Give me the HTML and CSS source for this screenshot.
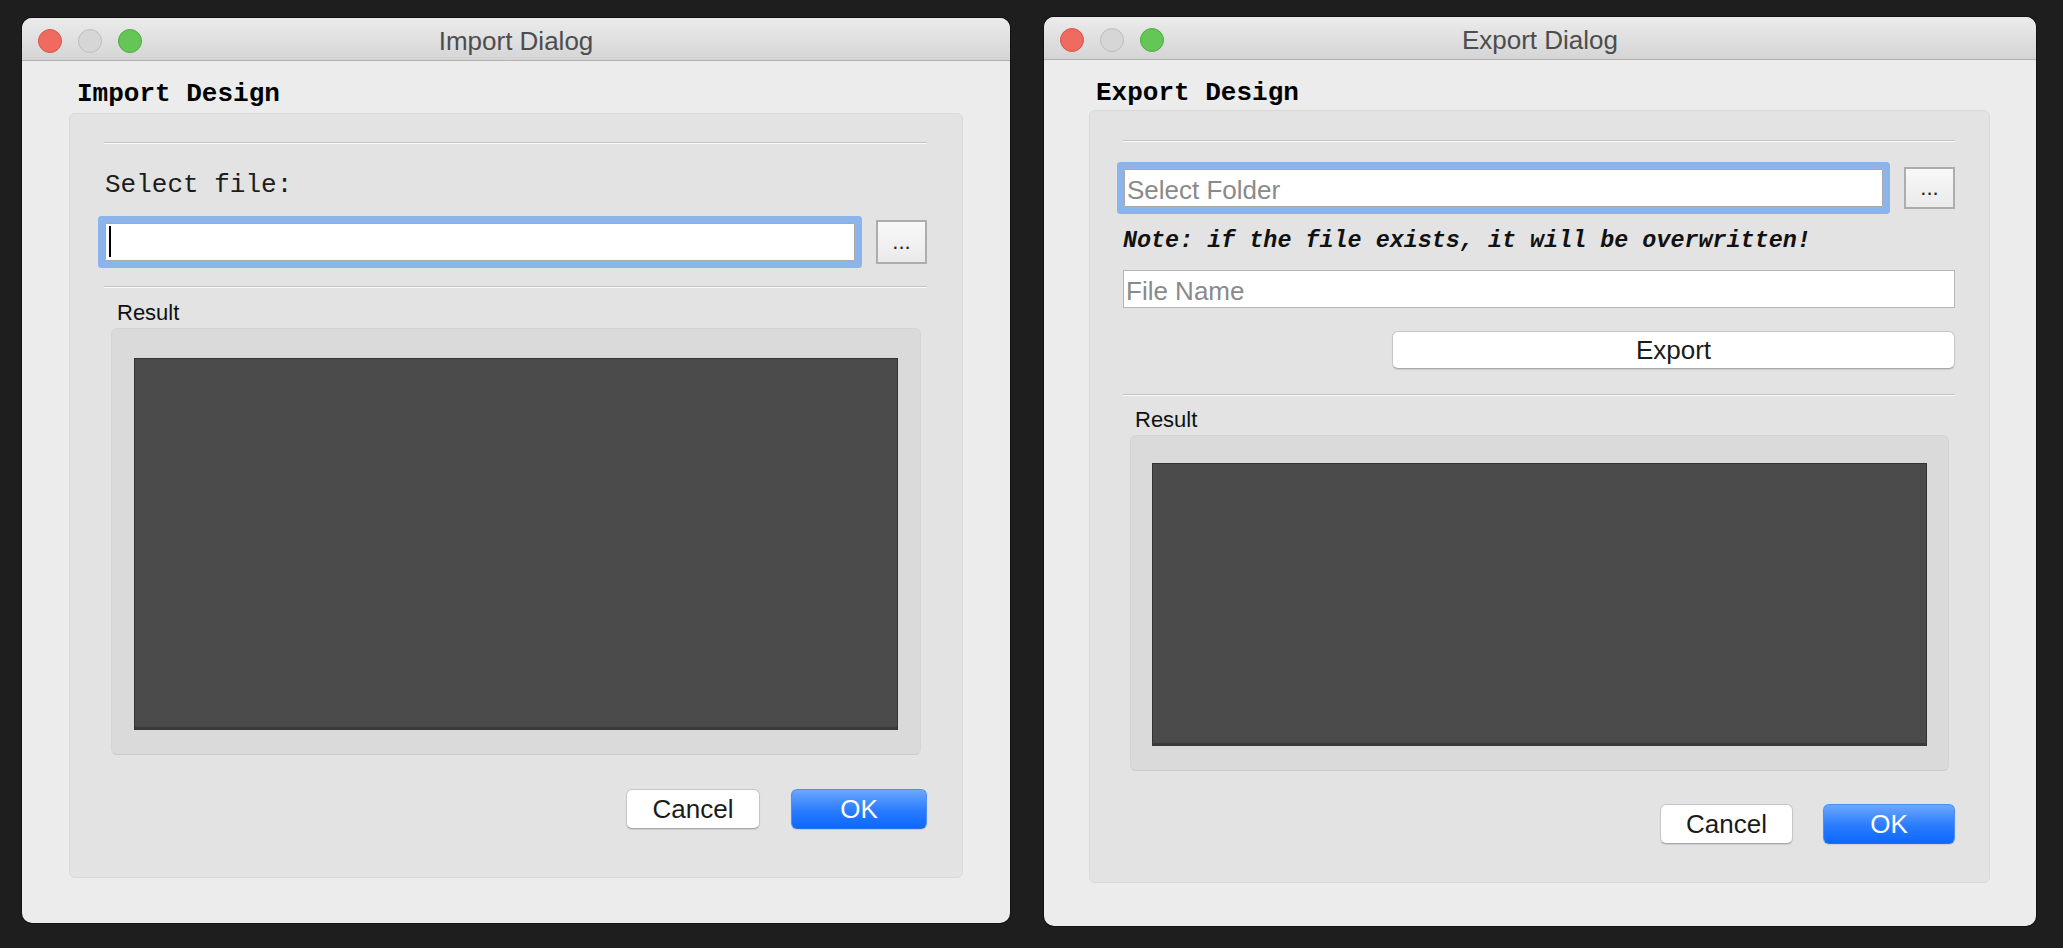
FILE: index.html
```html
<!DOCTYPE html>
<html lang="en">
<head>
<meta charset="utf-8">
<title>Import / Export Dialogs</title>
<link rel="stylesheet" href="styles.css">
</head>
<body>
<div class="desk">
  <section class="win win-import">
    <header class="titlebar">
      <div class="lights"><span class="light close"></span><span class="light min"></span><span class="light max"></span></div>
      <div class="title">Import Dialog</div>
      <div></div>
    </header>
    <div class="win-body">
      <h1 class="heading">Import Design</h1>
      <div class="panel">
        <div class="sep"></div>
        <div class="mono-label">Select file:</div>
        <div class="file-row">
          <div class="field focused"><span class="caret"></span></div>
          <button class="browse">...</button>
        </div>
        <div class="sep sep-2"></div>
        <div class="result-label">Result</div>
        <div class="result-box"><div class="result-view"></div></div>
        <div class="actions">
          <button class="btn btn-cancel">Cancel</button>
          <button class="btn btn-ok">OK</button>
        </div>
      </div>
    </div>
  </section>

  <section class="win win-export">
    <header class="titlebar">
      <div class="lights"><span class="light close"></span><span class="light min"></span><span class="light max"></span></div>
      <div class="title">Export Dialog</div>
      <div></div>
    </header>
    <div class="win-body">
      <h1 class="heading">Export Design</h1>
      <div class="panel">
        <div class="sep"></div>
        <div class="file-row">
          <div class="field focused"><span class="placeholder">Select Folder</span></div>
          <button class="browse">...</button>
        </div>
        <div class="note">Note: if the file exists, it will be overwritten!</div>
        <div class="field name-field"><span class="placeholder">File Name</span></div>
        <button class="btn btn-export">Export</button>
        <div class="sep sep-2"></div>
        <div class="result-label">Result</div>
        <div class="result-box"><div class="result-view"></div></div>
        <div class="actions">
          <button class="btn btn-cancel">Cancel</button>
          <button class="btn btn-ok">OK</button>
        </div>
      </div>
    </div>
  </section>
</div>
</body>
</html>
```
FILE: styles.css
```css
* { box-sizing: border-box; }
html, body { margin: 0; height: 100%; }
body {
  background: #1e1e1e;
  font-family: "Liberation Sans", Arial, sans-serif;
  overflow: hidden;
}
.desk {
  display: flex;
  align-items: flex-start;
  gap: 34px;
  padding-left: 22px;
}

/* window */
.win {
  display: flex;
  flex-direction: column;
  background: #ececec;
  border-radius: 10px;
  overflow: hidden;
  box-shadow: 0 0 0 1px rgba(0,0,0,0.4);
}
.win-import { width: 988px; height: 905px; margin-top: 18px; }
.win-export { width: 992px; height: 909px; margin-top: 17px; }

.titlebar {
  flex: none;
  display: grid;
  grid-template-columns: 1fr auto 1fr;
  align-items: center;
  height: 43px;
  padding: 3px 16px 0;
  background: linear-gradient(#ebebeb, #d5d5d5);
  border-bottom: 1px solid #b1b1b1;
}
.lights { display: flex; gap: 16px; }
.light {
  width: 24px;
  height: 24px;
  border-radius: 50%;
  border: 1px solid;
}
.light.close { background: #ef6b5f; border-color: #d8554a; }
.light.min { background: #d6d6d6; border-color: #bdbdbd; }
.light.max { background: #63c655; border-color: #4fab41; }
.title {
  font-size: 26px;
  line-height: 26px;
  color: #4d4d4d;
}

.win-body {
  flex: 1;
  display: flex;
  flex-direction: column;
  padding: 20px 47px 45px;
}
.win-export .win-body { padding: 20px 46px 43px 45px; }

.heading {
  margin: 0 0 6px;
  padding-left: 8px;
  font: bold 26px/26px "Liberation Mono", "Courier New", monospace;
  color: #000;
}
.win-export .heading { margin-bottom: 4px; padding-left: 7px; }

.panel {
  flex: 1;
  display: flex;
  flex-direction: column;
  background: #e3e3e3;
  border: 1px solid #d9d9d9;
  border-radius: 6px;
  padding: 28px 35px 48px 34px;
}
.win-export .panel { padding: 29px 34px 38px 33px; }

.sep {
  flex: none;
  height: 2px;
  border-top: 1px solid #c2c2c2;
  border-bottom: 1px solid #fbfbfb;
}
.sep-2 { margin-top: 22px; }
.win-export .sep-2 { margin-top: 25px; }

.mono-label {
  margin-top: 28px;
  padding-left: 1px;
  font: 26px/26px "Liberation Mono", "Courier New", monospace;
  color: #1c1c1c;
}

.file-row {
  display: flex;
  align-items: center;
  gap: 21px;
  margin-top: 22px;
}
.win-export .file-row { margin-top: 25px; }

.field {
  height: 38px;
  background: #fff;
  border: 1px solid #b4b4b4;
  padding: 4px 2px 0;
  font-size: 26px;
  line-height: 32px;
  white-space: nowrap;
}
.file-row .field { flex: 1; margin-left: 1px; }
.field.focused {
  border-color: #a9a9a9;
  border-radius: 1px;
  box-shadow: 0 0 0 7px #8cb4ec;
}
.caret {
  display: block;
  width: 2px;
  height: 31px;
  margin: -2px 0 0 1px;
  background: #000;
}
.placeholder { color: #8a8a8a; }

.browse {
  flex: none;
  width: 51px;
  height: 44px;
  padding: 0;
  border: 2px solid #adadad;
  background: linear-gradient(#f8f8f8, #eaeaea);
  font: 22px/22px "Liberation Sans", Arial, sans-serif;
  color: #222;
}
.win-export .browse { height: 42px; }

.note {
  margin-top: 20px;
  font: italic bold 23.4px/24px "Liberation Mono", "Courier New", monospace;
  color: #111;
  white-space: nowrap;
}
.name-field { margin-top: 17px; }

.btn {
  height: 40px;
  padding: 0;
  font: 26px/26px "Liberation Sans", Arial, sans-serif;
  color: #1b1b1b;
  background: #fff;
  border: 1px solid #c6c6c6;
  border-bottom-color: #a8a8a8;
  border-radius: 6px;
  box-shadow: 0 1px 1px rgba(0,0,0,0.1);
}
.btn-export {
  align-self: flex-end;
  width: 563px;
  height: 38px;
  margin-top: 23px;
}
.btn-cancel { width: 134px; }
.btn-ok {
  width: 136px;
  color: #fff;
  background: linear-gradient(#6ba7fd, #2a7bfe 55%, #0c68fe);
  border-color: #4d8ff7;
  border-bottom-color: #2a6fe6;
}
.win-export .btn-cancel { width: 133px; }
.win-export .btn-ok { width: 132px; }

.result-label {
  margin-top: 14px;
  padding-left: 13px;
  font: 22px/22px "Liberation Sans", Arial, sans-serif;
  color: #111;
}
.win-export .result-label { margin-top: 13px; padding-left: 12px; }

.result-box {
  flex: 1;
  display: flex;
  margin: 4px 6px 0 7px;
  padding: 29px 22px 24px;
  background: #dadada;
  border: 1px solid #d4d4d4;
  border-bottom-color: #c9c9c9;
  border-radius: 6px;
}
.win-export .result-box { padding: 27px 21px 24px; }
.result-view {
  flex: 1;
  background: #4b4b4b;
  border: 1px solid #333;
  border-bottom: 3px solid #3a3a3a;
}

.actions {
  display: flex;
  justify-content: flex-end;
  gap: 31px;
  margin-top: 34px;
}
.win-export .actions { gap: 30px; margin-top: 33px; }
```
